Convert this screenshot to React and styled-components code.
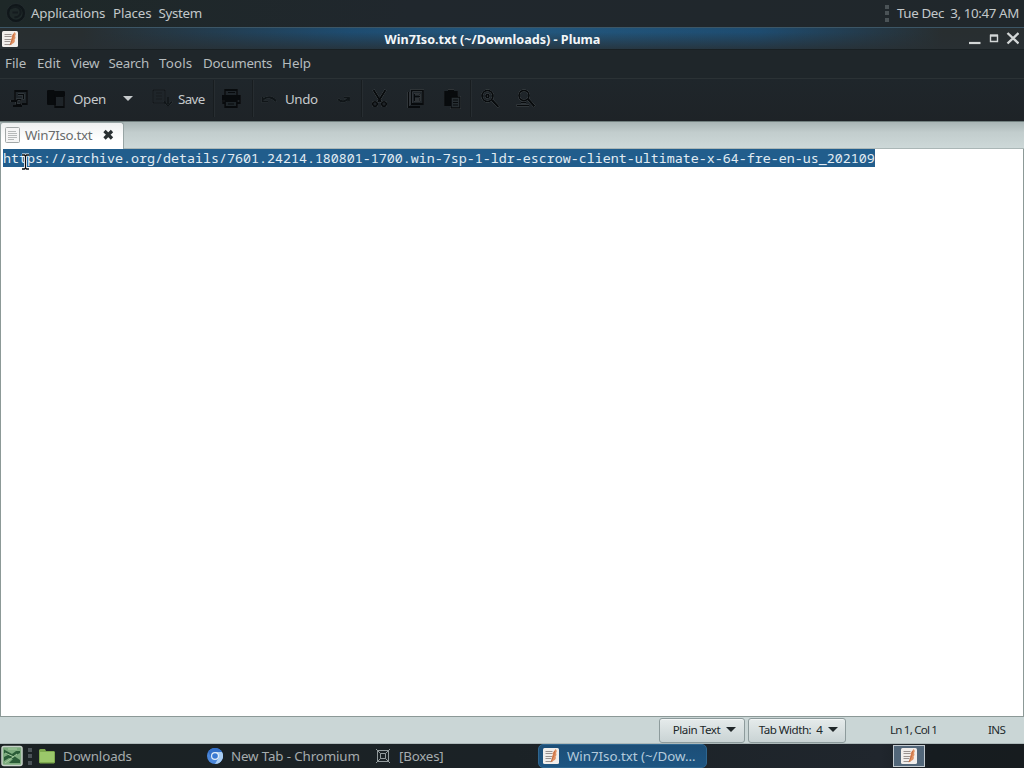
import styled, { createGlobalStyle } from 'styled-components';

const GlobalStyle = createGlobalStyle`
  * {
    box-sizing: border-box;
  }
  body {
    margin: 0;
    overflow: hidden;
    background: #1f262a;
    font-family: "Noto Sans", sans-serif;
    font-size: 13.33px;
  }
  svg {
    display: block;
    flex: none;
  }
`

const Screen = styled.div`
  width: 1024px;
  height: 768px;
  display: flex;
  flex-direction: column;
`

const Label = styled.span`
  flex: none;
  width: ${props => props.$w}px;
  margin-left: ${props => props.$gap || 0}px;
  letter-spacing: ${props => props.$ls || 0}px;
  white-space: pre;
`

const TopPanel = styled.header`
  height: 27px;
  padding: 0 5px 1px 6px;
  display: flex;
  align-items: center;
  color: #c3c8ca;
  background: linear-gradient(90deg, #1e2828, #20272d 40%, #20272b);
`

const Grip = styled.div`
  width: 4px;
  height: 17px;
  margin-left: ${props => props.$left};
  background: repeating-linear-gradient(#4b5357 0 4px, transparent 4px 6.5px);
`

const TitleBar = styled.div`
  height: 22px;
  padding: 0 5px 0 2px;
  display: grid;
  grid-template-columns: 52px 1fr 52px;
  align-items: center;
  border-top: 1px solid #3c5666;
  background:
    linear-gradient(rgba(31, 38, 42, 0) 20%, rgba(40, 47, 51, 0.8)),
    linear-gradient(90deg, #282e30 8%, #1e4c70 34%, #23587f 50%, #1e4c70 74%, #282e30 92%);
`

const WindowTitle = styled.div`
  color: #f3f7f9;
  font-weight: 700;
  font-size: 12.6px;
  text-align: center;
  white-space: pre;
  padding: 1px 36px 0 0;
`

const MenuBar = styled.nav`
  height: 30px;
  padding: 0 0 2px 5px;
  display: flex;
  align-items: center;
  color: #b6bcbe;
  background: #1f262a;
  border-bottom: 1px solid #2b3235;
  border-top: 1px solid #192023;
`

const ToolBar = styled.div`
  height: 42px;
  padding: 0 0 3px 9px;
  display: flex;
  align-items: center;
  color: #c6cacc;
  background: linear-gradient(#1f262b, #1e2327);
`

const ToolIcon = styled.svg`
  width: 22px;
  height: 22px;
  margin-left: ${props => props.$gap || 0}px;
  fill: none;
  stroke: ${props => props.$dim ? '#101518' : '#080b0d'};
  stroke-width: 1.8;
  filter:
    drop-shadow(0 0 0.4px ${props => props.$dim ? '#454d51' : '#70787c'})
    drop-shadow(0 0.6px 0.4px ${props => props.$dim ? '#30373b' : '#454d51'});
`

const Separator = styled.div`
  width: 2px;
  height: 37px;
  margin-left: ${props => props.$gap}px;
  border-left: 1px solid #181d20;
  border-right: 1px solid #272d31;
`

const Arrow = styled.div`
  flex: none;
  margin-left: ${props => props.$gap}px;
  border: 5px solid transparent;
  border-top-color: currentColor;
  border-bottom-width: 0;
`

const TabStrip = styled.div`
  height: 28px;
  display: flex;
  border-top: 1px solid #71807f;
  border-bottom: 1px solid #aab6b6;
  background: linear-gradient(#a9b6b6, #c2cdcd 40%, #cdd8d8);
`

const Tab = styled.div`
  width: 124px;
  height: 27px;
  padding: 0 0 2px 4px;
  display: flex;
  align-items: center;
  color: #686b6b;
  background: linear-gradient(#eef0f0, #fff 65%);
  border: 1px solid #98a5a5;
  border-width: 1px 1px 0;
  border-radius: 3px 3px 0 0;
`

const Editor = styled.main`
  height: 568px;
  padding-left: 2px;
  background: #fff;
  border: 1px solid #8c9997;
  border-top: 0;
  position: relative;
`

const Selection = styled.div`
  width: 872px;
  height: 18px;
  color: #e2ecf3;
  background: #215d8c;
  font: 13.33px/18px "Noto Sans Mono", "DejaVu Sans Mono", monospace;
  white-space: pre;
`

const TextCursor = styled.svg`
  position: absolute;
  left: 20px;
  top: 4px;
`

const StatusBar = styled.footer`
  height: 27px;
  padding-left: 659px;
  display: flex;
  align-items: center;
  color: #222a2c;
  font-size: 11.6px;
  background: #cad6d6;
  border-bottom: 1px solid #adb9ba;
`

const StatusButton = styled.button`
  width: ${props => props.$w}px;
  height: 25px;
  margin-right: 3px;
  padding: 0 0 1px ${props => props.$pad}px;
  display: flex;
  align-items: center;
  color: #202729;
  font: inherit;
  background: linear-gradient(#e5ebeb, #c9d3d4);
  border: 1px solid #8d9b9c;
  border-radius: 3px;
  box-shadow: inset 0 1px #f2f5f5;
`

const StatusText = styled(Label)`
  padding-bottom: 1px;
`

const Taskbar = styled.footer`
  height: 24px;
  display: flex;
  align-items: center;
  color: #a6acae;
  background: linear-gradient(90deg, #1b2224, #1b2226 50%, #20262d 86%, #161c20 91%, #171c1f);
`

const Task = styled.div`
  width: ${props => props.$w}px;
  height: 24px;
  padding-left: ${props => props.$pad}px;
  display: flex;
  align-items: center;
  ${props => props.$active && `
    color: #b3cadb;
    background: linear-gradient(#1c4e77, #1d5582);
    border: 1px solid #2f668f;
    border-radius: 5px;
  `}
`

const Workspace = styled.div`
  width: 32px;
  height: 22px;
  margin-left: 186px;
  display: grid;
  place-items: center;
  background: #52677a;
  border: 1px solid #c1c9cf;
`

const MENU = [
  { text: 'File', w: 32, ls: 0 },
  { text: 'Edit', w: 34, ls: -0.1 },
  { text: 'View', w: 37.5, ls: -0.2 },
  { text: 'Search', w: 50.5, ls: -0.3 },
  { text: 'Tools', w: 44, ls: 0.2 },
  { text: 'Documents', w: 79, ls: -0.3 },
  { text: 'Help', w: 32, ls: 0 },
]

function PlumaIcon() {
  return (
    <svg width="16" height="16" viewBox="0 0 16 16">
      <rect width="16" height="16" rx="1.5" fill="#f1eeeb" />
      <path d="M2.5 3.5h7M2.5 5.5h7M2.5 8.5h7M2.5 10.5h6M2.5 13.5h7" stroke="#9a9390" />
      <path d="M12.5 1c1.8 1.2 1.4 3.2.4 4 1 .8.6 3-.4 3.5.6 1 .5 2.8-.8 3.4L7.5 14.5l1.7-4.6-.6-1.4 1.4-1.7-.6-1.6 1.4-1.7z" fill="#e29161" />
      <path d="m11.5 3-.8 4.5L8 14" fill="none" stroke="#b9643d" strokeWidth=".8" />
    </svg>
  )
}

function MateIcon() {
  return (
    <svg width="20" height="20" viewBox="0 0 20 20" fill="none">
      <circle cx="10" cy="10" r="8" stroke="#10171a" strokeWidth="2.6" />
      <path d="M5 5.5c3-3 8.5-1.5 9.5 2.2 1 4-2.5 7-6 6.4M6.5 9.5h5.5" stroke="#141b1e" strokeWidth="2" />
      <circle cx="10" cy="10" r="9.5" stroke="#252e30" strokeWidth=".6" />
    </svg>
  )
}

function WindowButtons() {
  return (
    <svg width="52" height="20" viewBox="0 0 52 20" fill="none" stroke="#d3d7d7">
      <path d="M2 14h11.5" strokeWidth="2.2" />
      <path d="M23.5 6.5h7v6h-7z" strokeWidth="1.4" />
      <path d="M23 6.5h8" strokeWidth="2.2" />
      <path d="m40.5 4 11 10.5m0-10.5-11 10.5" strokeWidth="2.4" />
    </svg>
  )
}

function Tools() {
  return (
    <ToolBar>
      <ToolIcon>
        <path d="M6 9V3h12v13h-5" />
        <path d="M9 6.5h5.5v5" strokeWidth="1.4" />
        <path d="M6 9v5M1.500 13h7M4 18h9" />
        <path d="M8 11.500h4v5H7z" strokeWidth="1.4" />
      </ToolIcon>
      <ToolIcon $gap="15">
        <path d="M2 16V3h6l1 2h9v2" />
        <path d="M2 4h16v3H9v9H2z" fill="#080b0d" />
        <path d="M9 8h9v11H9z" />
      </ToolIcon>
      <Label $gap="5" $w="34" $ls="-0.35">Open</Label>
      <Arrow $gap="16" />
      <ToolIcon $gap="18" $dim>
        <path d="M2 2h12v13H2z" strokeWidth="1.5" />
        <path d="M5 5h6M5 8h6M5 11h6" strokeWidth="1.3" />
        <path d="M17 9v7m-4-2.5 4 4.5 4-4.500" />
      </ToolIcon>
      <Label $gap="5" $w="29" $ls="-0.6">Save</Label>
      <Separator $gap="6" />
      <ToolIcon $gap="5">
        <path d="M5 7V2h12v5M3 8h17v7H3z" />
        <path d="M3 8h16v3H3z" fill="#080b0d" />
        <path d="M5 13h12v6H5z" fill="#1f262a" />
        <path d="M8 4.5h7M8 16h6" strokeWidth="1.2" />
      </ToolIcon>
      <Separator $gap="10" />
      <ToolIcon $gap="5" $dim>
        <path d="M4 11.5c4-3.500 10-3 13 2" strokeWidth="2.2" />
        <path d="M3.5 9v4.500H9" />
      </ToolIcon>
      <Label $gap="4" $w="34" $ls="-0.4">Undo</Label>
      <ToolIcon $gap="16" $dim>
        <path d="M3 11c3 3.5 8 3 11-1" strokeWidth="2.2" />
        <path d="M9 9.5h5V13" />
      </ToolIcon>
      <Separator $gap="4" />
      <ToolIcon $gap="6">
        <path d="m4.500 2 7.500 12M16.500 2 9 14" strokeWidth="2.2" />
        <circle cx="6" cy="16" r="2.2" />
        <circle cx="15" cy="16" r="2.2" />
      </ToolIcon>
      <ToolIcon $gap="14">
        <path d="M6.500 2.500h11.500v13.500H6.500z" />
        <path d="M3.500 4v15H15" />
        <path d="M9.500 6h5.500v7H9.500zM10 8.500h5M10 11h5" strokeWidth="1" />
      </ToolIcon>
      <ToolIcon $gap="14">
        <path d="M4 4h12v13H4z" fill="#080b0d" />
        <path d="M7 3h6" strokeWidth="3" />
        <path d="M10 9h9v11h-9z" fill="#272e32" strokeWidth="1.4" />
        <path d="M12 12h5M12 14.5h5M12 17h5" strokeWidth="1" />
      </ToolIcon>
      <Separator $gap="7" />
      <ToolIcon $gap="7">
        <circle cx="8.5" cy="8" r="5.5" />
        <circle cx="8.5" cy="8" r="1.5" />
        <path d="m13 12 6.5 7" strokeWidth="2.4" />
      </ToolIcon>
      <ToolIcon $gap="13">
        <circle cx="10" cy="7.5" r="5" />
        <path d="m14 11 6.5 7.500" strokeWidth="2.4" />
        <path d="M7 14.500h5M2.500 17.500H15" strokeWidth="1.5" />
      </ToolIcon>
    </ToolBar>
  )
}

function DocumentTab() {
  return (
    <Tab>
      <svg width="16" height="16" viewBox="0 0 16 16">
        <rect x=".5" y=".5" width="14" height="15" rx="1" fill="#f5f5f5" stroke="#a3a8a8" />
        <path d="M3 4.5h8M3 6.5h9M3 8.5h9M3 10.5h9M3 12.5h6" stroke="#b6b9b9" />
      </svg>
      <Label $gap="4" $w="70" $ls="-0.33">Win7Iso.txt</Label>
      <svg width="26" height="14" viewBox="0 0 26 14">
        <path d="m9.5 3 7.500 7.500m0-7.500-7.500 7.500" stroke="#292f31" strokeWidth="3.3" />
      </svg>
    </Tab>
  )
}

function BottomPanel() {
  return (
    <Taskbar>
      <svg width="24" height="24" viewBox="0 0 24 24">
        <rect x="2" y="2.5" width="20" height="19" rx="2" fill="#7dab7e" stroke="#c6d1c8" strokeWidth="1.5" />
        <path d="M4 5.500 12 10l4-3h4v2l-6 3 6 4v3H9l4-4-4-1-5 3v-4l4-2-4-2z" fill="#2b5c38" />
        <path d="m5 19 12-9M5 9l9 4M8 5h9" stroke="#a5cc9f" />
      </svg>
      <Grip $left="4px" />
      <Task $w="174" $pad="7">
        <svg width="16" height="16" viewBox="0 0 16 16">
          <path d="M0 2.5Q0 1 1.5 1H6l1 2h8l1 1v10.5l-1 1H1l-1-1z" fill="#7da94d" />
          <path d="M1 4h14v10H1z" fill="#9bc76a" />
        </svg>
        <Label $gap="8" $w="72" $ls="-0.1">Downloads</Label>
      </Task>
      <Task $w="168" $pad="1">
        <svg width="16" height="16" viewBox="0 0 16 16">
          <circle cx="8" cy="8" r="8" fill="#4a86d9" />
          <path d="M8 4h7a8 8 0 0 1-7 12l3.5-6z" fill="#a9cdf3" />
          <path d="M1.2 4A8 8 0 0 1 15 4H8L4.6 10z" fill="#3470c8" />
          <circle cx="8" cy="8" r="4" fill="#e3edf8" />
          <circle cx="8" cy="8" r="2.8" fill="#3978d2" />
        </svg>
        <Label $gap="8" $w="130" $ls="-0.13">New Tab - Chromium</Label>
      </Task>
      <Task $w="164" $pad="2">
        <svg width="14" height="14" viewBox="0 0 14 14" fill="none" stroke="#929a9c">
          <path d="M2 1.5h10M2 12.5h10M1.5 2v10M12.5 2v10M4.5 4.5h5v5h-5zM0 0l4.5 4.5M14 0 9.5 4.5M0 14l4.5-4.5M14 14 9.5 9.5" />
        </svg>
        <Label $gap="9" $w="46" $ls="-0.2">[Boxes]</Label>
      </Task>
      <Task $w="169" $pad="4" $active>
        <PlumaIcon />
        <Label $gap="8" $w="130" $ls="-0.03">Win7Iso.txt (~/Dow…</Label>
      </Task>
      <Workspace>
        <PlumaIcon />
      </Workspace>
    </Taskbar>
  )
}

function App() {
  return (
    <Screen>
      <GlobalStyle />
      <TopPanel>
        <MateIcon />
        <Label $gap="5" $w="75" $ls="-0.2">Applications</Label>
        <Label $gap="7" $w="39" $ls="-0.15">Places</Label>
        <Label $gap="6.5" $w="45" $ls="-0.3">System</Label>
        <Grip $left="auto" />
        <Label $gap="8" $w="122" $ls="-0.37">Tue Dec  3, 10:47 AM</Label>
      </TopPanel>
      <TitleBar>
        <PlumaIcon />
        <WindowTitle>Win7Iso.txt (~/Downloads) - Pluma</WindowTitle>
        <WindowButtons />
      </TitleBar>
      <MenuBar>
        {MENU.map(item => (
          <Label key={item.text} $w={item.w} $ls={item.ls}>{item.text}</Label>
        ))}
      </MenuBar>
      <Tools />
      <TabStrip>
        <DocumentTab />
      </TabStrip>
      <Editor>
        <Selection>https://archive.org/details/7601.24214.180801-1700.win-7sp-1-ldr-escrow-client-ultimate-x-64-fre-en-us_202109</Selection>
        <TextCursor width="9" height="18" viewBox="0 0 9 18" fill="none">
          <path d="M1 2h2.5l1 1 1-1H8M1 16h2.5l1-1 1 1H8M4.5 3v12" stroke="#fff" strokeWidth="3" />
          <path d="M1 2h2.5l1 1 1-1H8M1 16h2.5l1-1 1 1H8M4.5 3v12" stroke="#090c0e" strokeWidth="1.3" />
        </TextCursor>
      </Editor>
      <StatusBar>
        <StatusButton $w="86" $pad="12">
          <Label $w="49" $ls="-0.45">Plain Text</Label>
          <Arrow $gap="5" />
        </StatusButton>
        <StatusButton $w="98" $pad="8">
          <Label $w="67" $ls="-0.5">Tab Width:  4</Label>
          <Arrow $gap="4" />
        </StatusButton>
        <StatusText $gap="41" $w="48" $ls="-0.8">Ln 1, Col 1</StatusText>
        <StatusText $gap="50" $w="20" $ls="-0.6">INS</StatusText>
      </StatusBar>
      <BottomPanel />
    </Screen>
  );
}

export default App;
